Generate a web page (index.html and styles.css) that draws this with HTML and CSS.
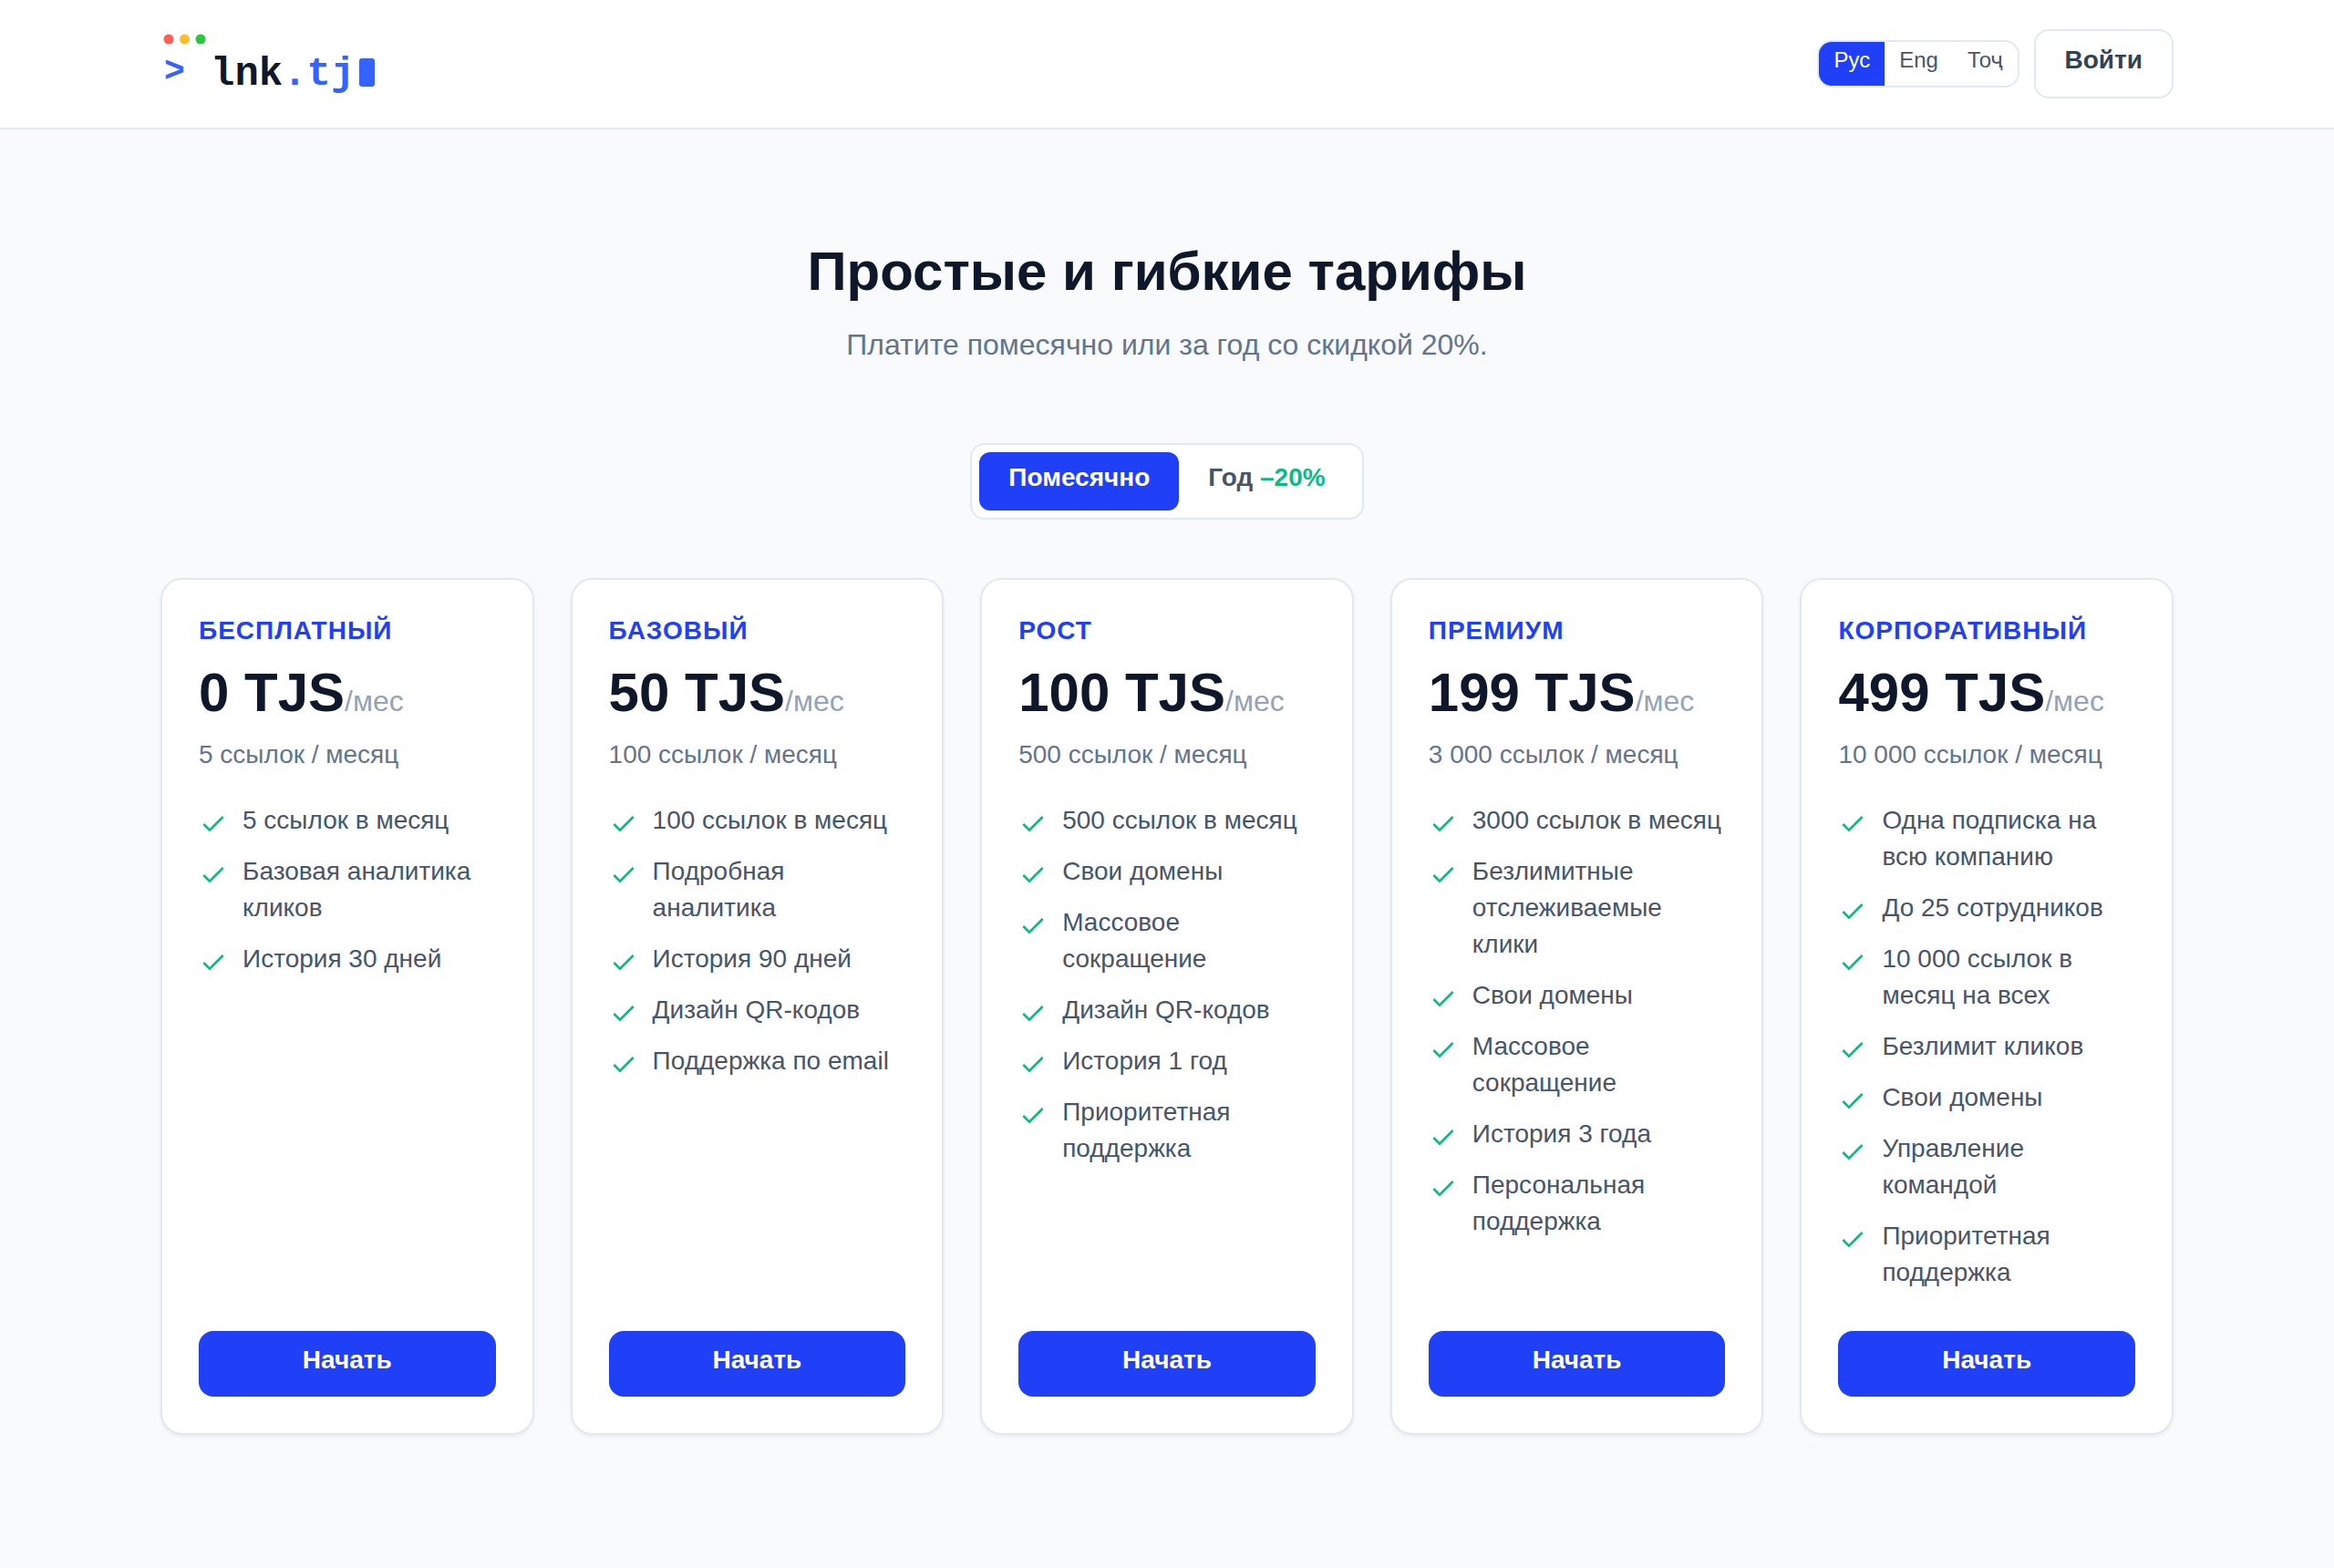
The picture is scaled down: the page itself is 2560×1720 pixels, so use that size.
FILE: index.html
```html
<!DOCTYPE html>
<html lang="ru">
  <head>
    <meta charset="UTF-8" />
    <meta name="viewport" content="width=device-width, initial-scale=1.0" />
    <title>lnk.tj - Тарифы</title>
    <link rel="stylesheet" href="styles.css">
  </head>
  <body>
    <svg class="sprite" aria-hidden="true">
      <symbol id="check" viewBox="0 0 24 24">
        <path d="M20 6L9 17l-5-5" />
      </symbol>
    </svg>

    <header class="header">
      <div class="container header__inner">
        <a class="logo" href="#" aria-label="lnk.tj">
          <svg class="logo__img" viewBox="0 0 240 76">
            <circle cx="9" cy="11" r="5.5" fill="#ff5f57" />
            <circle cx="26.5" cy="11" r="5.5" fill="#febc2e" />
            <circle cx="44" cy="11" r="5.5" fill="#28c840" />
            <text class="logo__accent logo__prompt" x="4" y="57">&gt;</text>
            <text class="logo__name" x="55" y="61">lnk<tspan class="logo__accent">.tj</tspan></text>
            <rect class="logo__accent" x="218" y="32" width="17" height="31" rx="3" />
          </svg>
        </a>
        <div class="header__actions">
          <div class="lang">
            <button class="lang__btn lang__btn--active">Рус</button>
            <button class="lang__btn">Eng</button>
            <button class="lang__btn">Тоҷ</button>
          </div>
          <a class="btn-login" href="#">Войти</a>
        </div>
      </div>
    </header>

    <main class="container main">
      <h1 class="title">Простые и гибкие тарифы</h1>
      <p class="subtitle">Платите помесячно или за год со скидкой 20%.</p>

      <div class="period">
        <button class="period__btn period__btn--active">Помесячно</button>
        <button class="period__btn">Год <span class="period__sale">–20%</span></button>
      </div>

      <div class="plans">
        <article class="plan">
          <h2 class="plan__name">Бесплатный</h2>
          <p class="plan__price">0 TJS<span>/мес</span></p>
          <p class="plan__limit">5 ссылок / месяц</p>
          <ul class="plan__list">
            <li><svg><use href="#check" /></svg>5 ссылок в месяц</li>
            <li><svg><use href="#check" /></svg>Базовая аналитика кликов</li>
            <li><svg><use href="#check" /></svg>История 30 дней</li>
          </ul>
          <button class="btn-start">Начать</button>
        </article>

        <article class="plan">
          <h2 class="plan__name">Базовый</h2>
          <p class="plan__price">50 TJS<span>/мес</span></p>
          <p class="plan__limit">100 ссылок / месяц</p>
          <ul class="plan__list">
            <li><svg><use href="#check" /></svg>100 ссылок в месяц</li>
            <li><svg><use href="#check" /></svg>Подробная аналитика</li>
            <li><svg><use href="#check" /></svg>История 90 дней</li>
            <li><svg><use href="#check" /></svg>Дизайн QR-кодов</li>
            <li><svg><use href="#check" /></svg>Поддержка по email</li>
          </ul>
          <button class="btn-start">Начать</button>
        </article>

        <article class="plan">
          <h2 class="plan__name">Рост</h2>
          <p class="plan__price">100 TJS<span>/мес</span></p>
          <p class="plan__limit">500 ссылок / месяц</p>
          <ul class="plan__list">
            <li><svg><use href="#check" /></svg>500 ссылок в месяц</li>
            <li><svg><use href="#check" /></svg>Свои домены</li>
            <li><svg><use href="#check" /></svg>Массовое сокращение</li>
            <li><svg><use href="#check" /></svg>Дизайн QR-кодов</li>
            <li><svg><use href="#check" /></svg>История 1 год</li>
            <li><svg><use href="#check" /></svg>Приоритетная поддержка</li>
          </ul>
          <button class="btn-start">Начать</button>
        </article>

        <article class="plan">
          <h2 class="plan__name">Премиум</h2>
          <p class="plan__price">199 TJS<span>/мес</span></p>
          <p class="plan__limit">3 000 ссылок / месяц</p>
          <ul class="plan__list">
            <li><svg><use href="#check" /></svg>3000 ссылок в месяц</li>
            <li><svg><use href="#check" /></svg>Безлимитные отслеживаемые клики</li>
            <li><svg><use href="#check" /></svg>Свои домены</li>
            <li><svg><use href="#check" /></svg>Массовое сокращение</li>
            <li><svg><use href="#check" /></svg>История 3 года</li>
            <li><svg><use href="#check" /></svg>Персональная поддержка</li>
          </ul>
          <button class="btn-start">Начать</button>
        </article>

        <article class="plan">
          <h2 class="plan__name">Корпоративный</h2>
          <p class="plan__price">499 TJS<span>/мес</span></p>
          <p class="plan__limit">10 000 ссылок / месяц</p>
          <ul class="plan__list">
            <li><svg><use href="#check" /></svg>Одна подписка на всю компанию</li>
            <li><svg><use href="#check" /></svg>До 25 сотрудников</li>
            <li><svg><use href="#check" /></svg>10 000 ссылок в месяц на всех</li>
            <li><svg><use href="#check" /></svg>Безлимит кликов</li>
            <li><svg><use href="#check" /></svg>Свои домены</li>
            <li><svg><use href="#check" /></svg>Управление командой</li>
            <li><svg><use href="#check" /></svg>Приоритетная поддержка</li>
          </ul>
          <button class="btn-start">Начать</button>
        </article>
      </div>
    </main>
  </body>
</html>
```

FILE: styles.css
```css
* {
  margin: 0;
  padding: 0;
  box-sizing: border-box;
}

body {
  font-family: "Liberation Sans", Arial, sans-serif;
  font-size: 28px;
  line-height: 40px;
  color: #475569;
  background-color: #f8fafc;
  min-height: 100vh;
}

button {
  border: none;
  font: inherit;
  color: inherit;
  background: none;
  cursor: pointer;
}

a {
  color: inherit;
  text-decoration: none;
}

.sprite {
  display: none;
}

.container {
  max-width: 2304px;
  margin: 0 auto;
  padding: 0 48px;
}

/* HEADER */
.header {
  background-color: #fff;
  border-bottom: 2px solid #e2e8f0;
}

.header__inner {
  display: flex;
  align-items: center;
  justify-content: space-between;
  padding-top: 32px;
  padding-bottom: 32px;
}

.logo__img {
  display: block;
  width: 240px;
  height: 76px;
  font-family: "Liberation Mono", monospace;
  font-size: 44px;
  font-weight: 700;
}

.logo__prompt {
  font-size: 38px;
}

.logo__name {
  fill: #0f172a;
}

.logo__accent {
  fill: #3563ff;
}

.header__actions {
  display: flex;
  align-items: center;
  gap: 16px;
}

.lang {
  display: flex;
  border: 2px solid #e2e8f0;
  border-radius: 16px;
  overflow: hidden;
}

.lang__btn {
  padding: 4px 16px 12px;
  font-size: 24px;
  line-height: 32px;
}

.lang__btn--active {
  color: #fff;
  background-color: #1f40f7;
}

.btn-login {
  padding: 12px 32px 20px;
  border: 2px solid #e2e8f0;
  border-radius: 16px;
  font-weight: 700;
  color: #334155;
}

/* PRICING */
.main {
  display: flex;
  flex-flow: column;
  align-items: center;
  padding-top: 120px;
  padding-bottom: 120px;
}

.title {
  font-size: 60px;
  line-height: 72px;
  color: #0f172a;
}

.subtitle {
  margin-top: 20px;
  font-size: 32px;
  line-height: 48px;
  color: #64748b;
}

.period {
  display: flex;
  margin-top: 84px;
  margin-bottom: 64px;
  padding: 8px;
  border: 2px solid #e2e8f0;
  border-radius: 16px;
  background-color: #fff;
}

.period__btn {
  padding: 8px 32px 16px;
  border-radius: 12px;
  font-weight: 700;
}

.period__btn--active {
  color: #fff;
  background-color: #1f40f7;
}

.period__sale {
  color: #10b981;
}

.plans {
  width: 100%;
  display: grid;
  grid-template-columns: repeat(5, minmax(0, 1fr));
  gap: 40px;
}

.plan {
  display: flex;
  flex-flow: column;
  padding: 36px 40px 40px;
  border: 2px solid #e2e8f0;
  border-radius: 24px;
  background-color: #fff;
  box-shadow: 0 2px 4px rgba(15, 23, 42, 0.06);
}

.plan__name {
  font-size: 28px;
  letter-spacing: 1px;
  text-transform: uppercase;
  color: #1f40f7;
}

.plan__price {
  margin: 8px 0;
  font-size: 60px;
  font-weight: 700;
  line-height: 80px;
  white-space: nowrap;
  color: #0f172a;
}

.plan__price span {
  font-size: 32px;
  font-weight: 400;
  line-height: 40px;
  color: #94a3b8;
}

.plan__limit {
  color: #64748b;
}

.plan__list {
  flex: 1;
  display: flex;
  flex-flow: column;
  gap: 16px;
  margin-top: 32px;
  margin-bottom: 44px;
  list-style: none;
}

.plan__list li {
  display: flex;
  gap: 16px;
}

.plan__list svg {
  flex-shrink: 0;
  width: 32px;
  height: 32px;
  margin-top: 8px;
  fill: none;
  stroke: #10b981;
  stroke-width: 2;
}

.btn-start {
  padding: 12px 32px 20px;
  border-radius: 16px;
  font-weight: 700;
  color: #fff;
  background-color: #1f40f7;
}
```
